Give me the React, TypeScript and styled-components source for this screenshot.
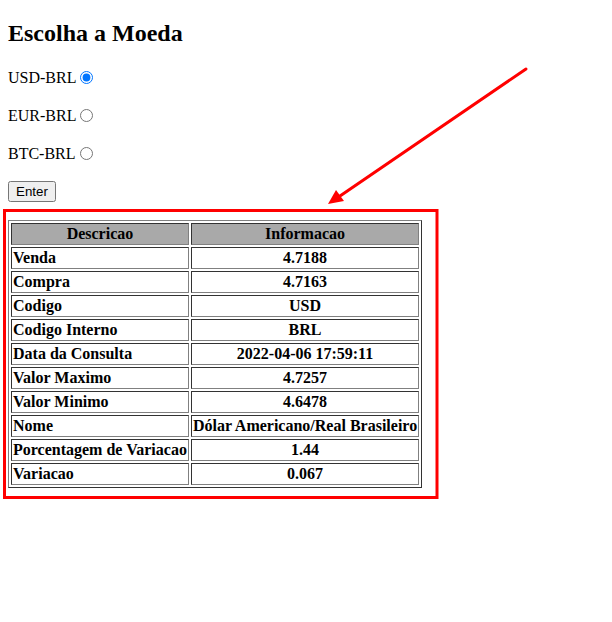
import React from "react";
import styled, { createGlobalStyle } from "styled-components";

const Global = createGlobalStyle`
  html, body { margin: 0; padding: 0; background: #fff; }
  body { padding: 8px; font-family: "Liberation Serif", "Times New Roman", serif; font-size: 16px; color: #000; }
`;

const Page = styled.div`
  display: flow-root;
`;

const Title = styled.h2`
  font-size: 24px;
  font-weight: bold;
  margin: 12px 0 20px;
`;

const Option = styled.p`
  margin: 16px 0;
  display: flex;
  align-items: center;
  height: 22px;
`;

const Radio = styled.input`
  margin: 0 0 2px 4px;
  width: 13px;
  height: 13px;
`;

const EnterButton = styled.button`
  font-family: Arial, "Liberation Sans", sans-serif;
  font-size: 13.33px;
  margin: 0;
  padding: 1px 6px;
  height: 21px;
`;

const Table = styled.table`
  margin-top: 18px;
  border: 1px solid;
  border-color: #808080 #333 #333 #808080;
  border-spacing: 2px;
  font-weight: bold;
`;

const Th = styled.th`
  background: #a9a9a9;
  border: 1px solid;
  border-color: #333 #808080 #808080 #333;
  padding: 1px;
`;

const Td = styled.td<{ $center?: boolean }>`
  border: 1px solid;
  border-color: #333 #808080 #808080 #333;
  padding: 1px;
  text-align: ${(p) => (p.$center ? "center" : "left")};
`;

const Overlay = styled.svg`
  position: absolute;
  left: 0;
  top: 0;
  pointer-events: none;
`;

const rows: [string, string][] = [
  ["Venda", "4.7188"],
  ["Compra", "4.7163"],
  ["Codigo", "USD"],
  ["Codigo Interno", "BRL"],
  ["Data da Consulta", "2022-04-06 17:59:11"],
  ["Valor Maximo", "4.7257"],
  ["Valor Minimo", "4.6478"],
  ["Nome", "Dólar Americano/Real Brasileiro"],
  ["Porcentagem de Variacao", "1.44"],
  ["Variacao", "0.067"],
];

export default function App() {
  return (
    <Page>
      <Global />
      <Title>Escolha a Moeda</Title>
      <Option>
        USD-BRL <Radio type="radio" name="m" defaultChecked />
      </Option>
      <Option>
        EUR-BRL <Radio type="radio" name="m" />
      </Option>
      <Option>
        BTC-BRL <Radio type="radio" name="m" />
      </Option>
      <EnterButton>Enter</EnterButton>
      <div>
        <Table>
          <thead>
            <tr>
              <Th>Descricao</Th>
              <Th>Informacao</Th>
            </tr>
          </thead>
          <tbody>
            {rows.map(([k, v]) => (
              <tr key={k}>
                <Td>{k}</Td>
                <Td $center>{v}</Td>
              </tr>
            ))}
          </tbody>
        </Table>
      </div>
      <Overlay width="612" height="622" viewBox="0 0 612 622">
        <rect x="4.5" y="210.5" width="432.5" height="287" fill="none" stroke="#ff0000" strokeWidth="3" />
        <line x1="526" y1="69" x2="340" y2="196" stroke="#ff0000" strokeWidth="3" strokeLinecap="round" />
        <polygon points="328,204 336,190 344,201" fill="#ff0000" />
      </Overlay>
    </Page>
  );
}
